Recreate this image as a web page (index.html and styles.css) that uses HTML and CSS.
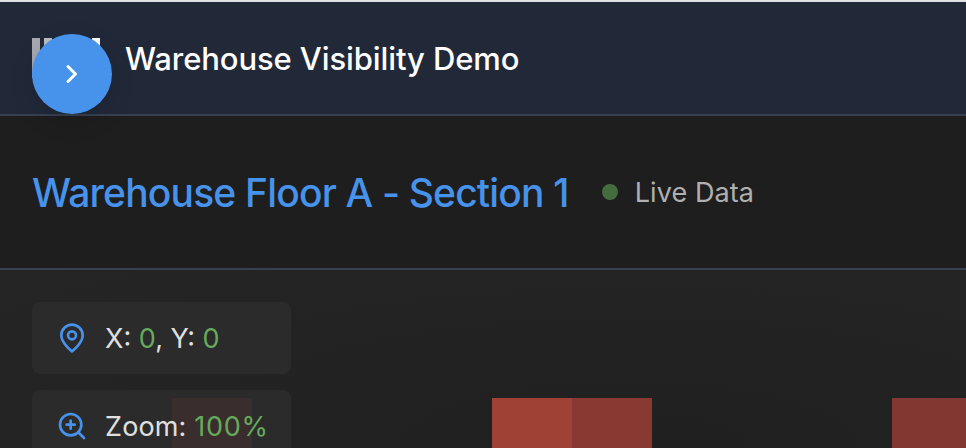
FILE: index.html
```html
<!DOCTYPE html>
<html lang="en">
<head>
<meta charset="utf-8">
<title>Warehouse Visibility Demo</title>
<link rel="stylesheet" href="styles.css">
</head>
<body>
<header class="topbar">
  <div class="brand">
    <div class="barcode"><i></i><i></i><i></i><i></i><i></i><i></i></div>
    <button class="toggle" aria-label="Open sidebar">
      <svg width="32" height="32" viewBox="0 0 32 32" fill="none" stroke="currentColor" stroke-width="3" stroke-linecap="round" stroke-linejoin="round"><path d="M12 8.5l7.5 7.5-7.5 7.5"/></svg>
    </button>
  </div>
  <h1 class="app-title">Warehouse Visibility Demo</h1>
</header>
<section class="section-bar">
  <h2 class="section-title">Warehouse Floor A - Section 1</h2>
  <div class="status"><span class="dot"></span><span class="live">Live Data</span></div>
</section>
<main class="floor">
  <div class="cell cell-a"></div>
  <div class="cell cell-b"></div>
  <div class="cell cell-c"></div>
  <div class="cell cell-d"></div>
  <div class="readouts">
    <div class="readout">
      <svg class="icon" viewBox="0 0 24 24"><path d="M20 10c0 6-8 12-8 12s-8-6-8-12a8 8 0 0 1 16 0Z"/><circle cx="12" cy="10" r="3"/></svg>
      <span class="coords">X: <b>0</b>, Y: <b>0</b></span>
    </div>
    <div class="readout">
      <svg class="icon" viewBox="0 0 24 24"><circle cx="11" cy="11" r="8"/><path d="M21 21l-4.35-4.35M11 8v6M8 11h6"/></svg>
      <span class="zoom">Zoom: <b>100%</b></span>
    </div>
  </div>
</main>
</body>
</html>
```
FILE: styles.css
```css
* { box-sizing: border-box; }
body {
  margin: 0;
  height: 448px;
  overflow: hidden;
  display: flex;
  flex-direction: column;
  background: #232323;
  font-family: Inter, "Liberation Sans", sans-serif;
}
h1, h2 { margin: 0; font-weight: 500; white-space: nowrap; }
.topbar {
  flex: none;
  height: 116px;
  display: flex;
  align-items: center;
  gap: 25px;
  padding: 0 32px;
  background: #212939;
  border-top: 2px solid #dfe3e4;
  border-bottom: 2px solid #374151;
}
.brand { position: relative; width: 68px; height: 40px; }
.barcode { display: flex; gap: 4px; height: 40px; }
.barcode i { width: 8px; background: #fff; }
.barcode i:nth-child(1) { background: #a6a9b0; }
.barcode i:nth-child(2) { background: #bcbfc4; }
.toggle {
  position: absolute;
  z-index: 2;
  left: 0;
  top: -4px;
  width: 80px;
  height: 80px;
  display: grid;
  place-items: center;
  padding: 0;
  border: 0;
  border-radius: 50%;
  color: #fff;
  background: #4792eb;
  box-shadow: 0 8px 24px rgba(0, 0, 0, .15);
}
.app-title {
  padding-top: 2px;
  font-size: 31px;
  line-height: 40px;
  letter-spacing: -.1px;
  color: #fff;
}
.section-bar {
  flex: none;
  height: 154px;
  display: flex;
  align-items: center;
  gap: 33px;
  padding: 0 32px;
  background: #1e1e1e;
  border-bottom: 2px solid #374151;
}
.section-title {
  padding: 2px 0 0;
  font-size: 39px;
  line-height: 48px;
  letter-spacing: -.82px;
  color: #4792eb;
}
.status { display: flex; align-items: center; gap: 17px; }
.dot { width: 16px; height: 16px; border-radius: 50%; background: #456c3e; }
.live { padding-top: 2px; font-size: 27px; line-height: 40px; letter-spacing: .1px; color: #b0b0b0; }
.floor {
  position: relative;
  flex: 1;
  min-height: 0;
  overflow: hidden;
  padding: 32px;
  background: radial-gradient(ellipse at 65% 100%, #202020, #252525);
}
.cell { position: absolute; top: 128px; width: 80px; height: 80px; }
.cell-a { left: 172px; background: #813832; }
.cell-b { left: 492px; background: #a04136; }
.cell-c { left: 572px; background: #8a3932; }
.cell-d { left: 892px; background: #823830; }
.readouts {
  position: relative;
  width: 259px;
  display: flex;
  flex-direction: column;
  gap: 16px;
}
.readout {
  flex: none;
  height: 72px;
  display: flex;
  align-items: center;
  gap: 17px;
  padding: 0 24px;
  border-radius: 8px;
  background: rgba(45, 45, 45, .85);
  color: #e0e0e0;
  font-size: 27px;
  line-height: 40px;
  white-space: nowrap;
}
.readout span { padding-top: 2px; }
.readout b { font-weight: 400; color: #66aa5c; }
.zoom { letter-spacing: .15px; }
.zoom b { letter-spacing: .7px; }
.icon {
  flex: none;
  width: 32px;
  height: 32px;
  fill: none;
  stroke: #4792eb;
  stroke-width: 2;
  stroke-linecap: round;
  stroke-linejoin: round;
}
```
